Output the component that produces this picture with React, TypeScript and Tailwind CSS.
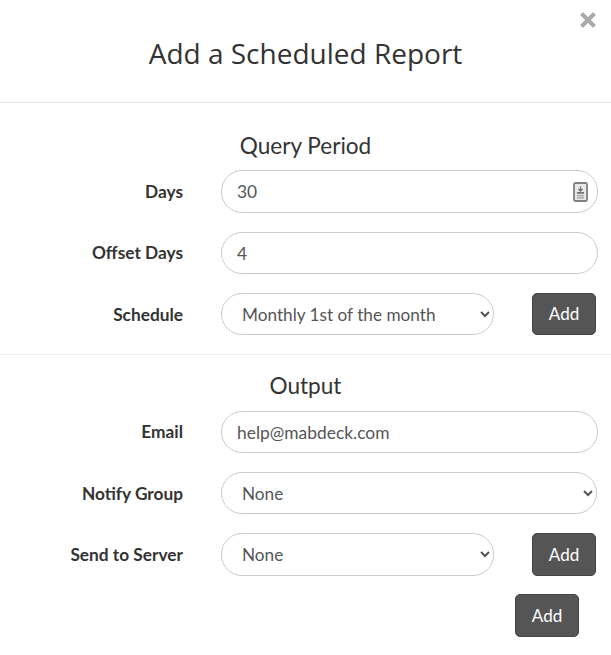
const inputClass =
  "h-[42px] rounded-[21px] border border-[#ccc] bg-white px-[15px] text-[17.4px] text-[#555] outline-none";
const selectClass =
  "h-[42px] rounded-[21px] border border-[#ccc] bg-white px-4 text-[17.2px] text-[#555] outline-none";

const Label = ({ children, className = "" }: { children: string; className?: string }) => (
  <label className={`w-[183px] shrink-0 text-right text-[17.3px] font-bold text-[#333] ${className}`}>{children}</label>
);

const AddButton = ({ className = "h-[42px]" }: { className?: string }) => (
  <button className={`w-16 rounded-[5px] border border-[#444] bg-[#555] text-[17px] text-white ${className}`}>
    Add
  </button>
);

const CardIcon = () => (
  <svg width="15" height="20" viewBox="0 0 15 20" className="absolute right-[10px] top-[12px]">
    <rect x="1" y="1" width="13" height="18" rx="1.5" fill="#e8e8e8" stroke="#808080" strokeWidth="1.8" />
    <path d="M7.5 4.5 V8 M5.5 7 L7.5 9 L9.5 7" stroke="#777" strokeWidth="1.4" fill="none" />
    <rect x="4" y="10" width="7" height="1.8" fill="#777" />
    <rect x="4" y="13" width="7" height="1.4" fill="#aaa" />
    <rect x="4" y="15.2" width="7" height="1.4" fill="#aaa" />
  </svg>
);

export default function App() {
  return (
    <div className="h-[655px] w-[611px] overflow-hidden bg-white font-['Lato',sans-serif] text-[#333]">
      <header className="relative h-[103px] border-b border-[#e5e5e5] pt-[33px] text-center">
        <h1 className="font-['Open_Sans',sans-serif] text-[28px] leading-[40px] text-[#333]">Add a Scheduled Report</h1>
        <button className="absolute right-[13px] top-[10px] text-[#aaa]" aria-label="Close">
          <svg width="20" height="20" viewBox="0 0 20 20">
            <path d="M3.5 3.5 L16.5 16.5 M16.5 3.5 L3.5 16.5" stroke="currentColor" strokeWidth="4" />
          </svg>
        </button>
      </header>

      <section className="h-[252px] border-b border-[#eee] pt-[28px]">
        <h2 className="mb-[9px] text-center text-[22.6px] leading-[30px]">Query Period</h2>
        <div className="flex flex-col gap-[19px]">
          <div className="flex items-center gap-[38px]">
            <Label>Days</Label>
            <div className="relative h-[43px] w-[377px]">
              <input className={`${inputClass} h-[43px] w-full`} defaultValue="30" />
              <CardIcon />
            </div>
          </div>
          <div className="flex items-center gap-[38px]">
            <Label>Offset Days</Label>
            <input className={`${inputClass} w-[377px]`} defaultValue="4" />
          </div>
          <div className="flex items-center gap-[38px]">
            <Label className="pt-[2px]">Schedule</Label>
            <select className={`${selectClass} w-[273px]`} defaultValue="monthly">
              <option value="monthly">Monthly 1st of the month</option>
            </select>
            <AddButton />
          </div>
        </div>
      </section>

      <section className="pt-[16px]">
        <h2 className="mb-[10px] text-center text-[22.6px] leading-[30px]">Output</h2>
        <div className="flex flex-col gap-[19px]">
          <div className="flex items-center gap-[38px]">
            <Label>Email</Label>
            <input className={`${inputClass} w-[377px]`} defaultValue="help@mabdeck.com" />
          </div>
          <div className="flex items-center gap-[38px]">
            <Label className="pt-[2px]">Notify Group</Label>
            <select className={`${selectClass} w-[376px]`}>
              <option>None</option>
            </select>
          </div>
          <div className="flex items-center gap-[38px]">
            <Label>Send to Server</Label>
            <select className={`${selectClass} h-[43px] w-[273px]`}>
              <option>None</option>
            </select>
            <AddButton className="h-[43px]" />
          </div>
        </div>
        <div className="mt-[18px] flex justify-end pr-[32px]">
          <AddButton className="h-[43px]" />
        </div>
      </section>
    </div>
  );
}
